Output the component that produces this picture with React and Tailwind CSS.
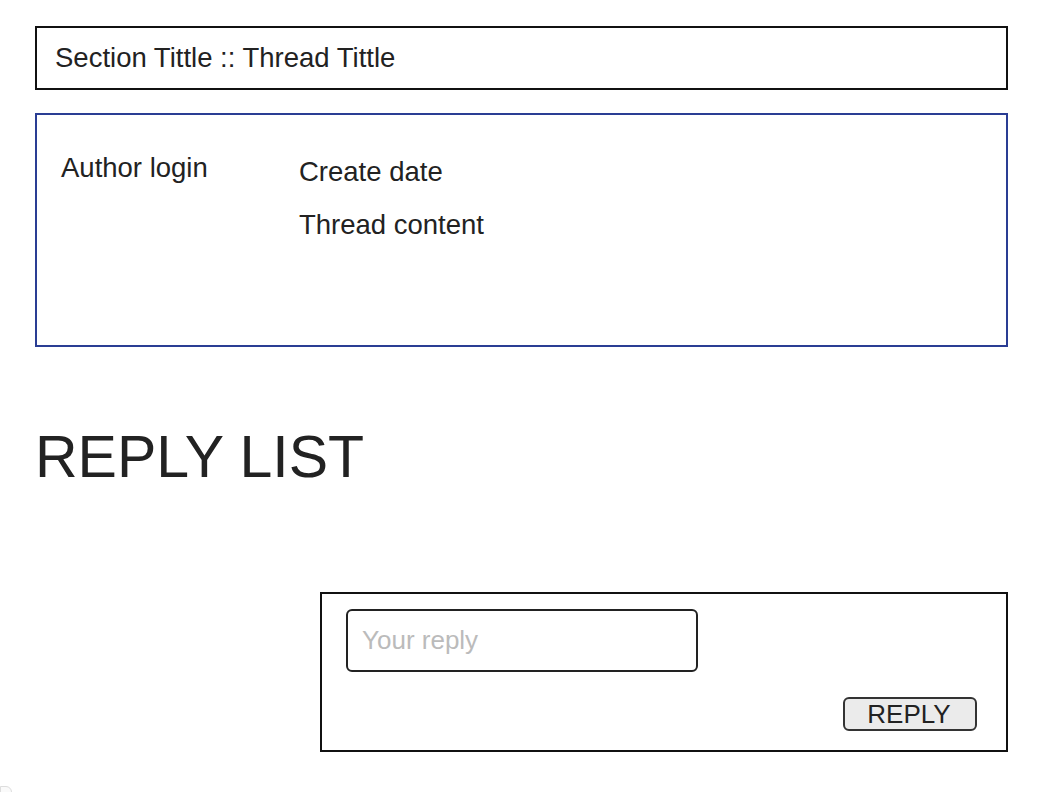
export default function App() {
  return (
    <div
      className="w-[1060px] h-[792px] overflow-hidden bg-white pt-[26px] pl-[35px] text-[#222]"
      style={{ fontFamily: '"Liberation Sans", Arial, sans-serif' }}
    >
      <div className="w-[973px] h-[64px] border-2 border-[#111] flex items-center pl-[18px] text-[27.5px] leading-none">
        Section Tittle :: Thread Tittle
      </div>

      <div className="mt-[23px] w-[973px] h-[234px] border-2 border-[#2a3d94] flex pt-[39px] text-[27.5px] leading-none">
        <div className="w-[262px] pl-[24px]">Author login</div>
        <div className="flex flex-col pt-[4px]">
          <div>Create date</div>
          <div className="mt-[25.5px]">Thread content</div>
        </div>
      </div>

      <h1 className="mt-[81px] text-[59px] leading-none font-normal">REPLY LIST</h1>

      <div className="mt-[105px] ml-[285px] w-[688px] h-[160px] border-2 border-[#111] flex flex-col pt-[15px] pl-[24px] pr-[29px]">
        <input
          type="text"
          placeholder="Your reply"
          className="w-[352px] h-[63px] border-2 border-[#222] rounded-[6px] pl-[14px] text-[26px] placeholder:text-[#bbb] outline-none"
          style={{ fontFamily: '"Liberation Sans", Arial, sans-serif' }}
        />
        <div className="flex justify-end mt-[25px]">
          <button
            className="w-[134px] h-[34px] bg-[#ebebeb] border-2 border-[#333] rounded-[6px] text-[26px] leading-none text-[#222] pr-[2px]"
            style={{ fontFamily: '"Liberation Sans", Arial, sans-serif' }}
          >
            REPLY
          </button>
        </div>
      </div>

      <div className="mt-[34px] -ml-[35px] w-[12px] h-[8px] border border-[#ddd] rounded-tr-[6px] bg-[#fafafa]"></div>
    </div>
  );
}
